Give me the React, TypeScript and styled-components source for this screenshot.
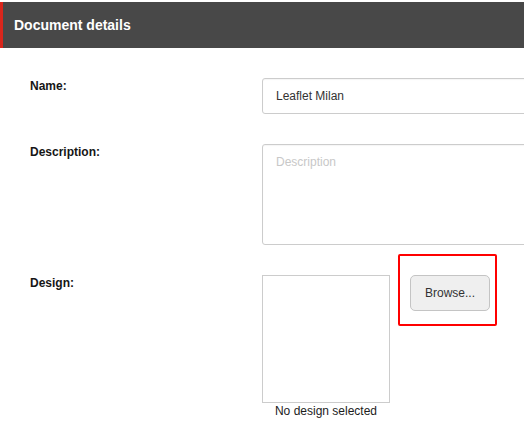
import React from "react";
import styled, { createGlobalStyle } from "styled-components";

const GlobalStyle = createGlobalStyle`
  html, body {
    margin: 0;
    padding: 0;
    background: #ffffff;
    font-family: "Liberation Sans", Arial, sans-serif;
    overflow: hidden;
  }
  #root {
    padding-top: 2px;
  }
`;

const Panel = styled.section`
  width: 100%;
  overflow: hidden;
`;

const Header = styled.header`
  display: flex;
  align-items: center;
  height: 46px;
  padding-left: 11px;
  background: #484848;
  border-left: 3px solid #d9261c;
  box-sizing: border-box;
`;

const Title = styled.h2`
  margin: 0;
  font-size: 14px;
  font-weight: bold;
  color: #ffffff;
  line-height: 16px;
`;

const Form = styled.form`
  display: grid;
  grid-template-columns: 232px 1fr;
  row-gap: 30px;
  padding: 30px 0 0 30px;
`;

const Label = styled.label`
  padding-top: 1px;
  font-size: 12px;
  line-height: 14px;
  font-weight: bold;
  color: #161616;
`;

const fieldBase = `
  box-sizing: border-box;
  width: 320px;
  border: 1px solid #cccccc;
  border-radius: 3px;
  background: #ffffff;
  font-family: "Liberation Sans", Arial, sans-serif;
  font-size: 12px;
  color: #333333;
  padding: 0 13px;
  outline: none;
  box-shadow: inset 0 1px 1px rgba(0, 0, 0, 0.04);
`;

const TextInput = styled.input`
  ${fieldBase}
  height: 36px;
`;

const TextArea = styled.textarea`
  ${fieldBase}
  height: 101px;
  padding-top: 10px;
  resize: none;
  &::placeholder {
    color: #c8c8c8;
  }
`;

const DesignRow = styled.div`
  display: flex;
  align-items: flex-start;
  gap: 20px;
`;

const Preview = styled.figure`
  margin: 0;
  display: flex;
  flex-direction: column;
  align-items: center;
  width: 128px;
`;

const PreviewBox = styled.div`
  box-sizing: border-box;
  width: 128px;
  height: 128px;
  border: 1px solid #cccccc;
  background: #ffffff;
`;

const Caption = styled.figcaption`
  margin-top: 1px;
  font-size: 12px;
  line-height: 14px;
  color: #1c1c1c;
  white-space: nowrap;
`;

const BrowseSlot = styled.div`
  position: relative;
`;

const Highlight = styled.span`
  position: absolute;
  left: -12px;
  top: -21px;
  right: -7px;
  bottom: -15px;
  border: 2px solid #ff0000;
  border-radius: 2px;
  pointer-events: none;
`;

const BrowseButton = styled.button`
  box-sizing: border-box;
  width: 80px;
  height: 36px;
  border: 1px solid #c4c4c4;
  border-radius: 5px;
  background: #efefef;
  font-family: "Liberation Sans", Arial, sans-serif;
  font-size: 12px;
  color: #333333;
  cursor: pointer;
`;

export default function App() {
  return (
    <>
      <GlobalStyle />
      <Panel>
        <Header>
          <Title>Document details</Title>
        </Header>
        <Form onSubmit={(e) => e.preventDefault()}>
          <Label htmlFor="doc-name">Name:</Label>
          <TextInput id="doc-name" defaultValue="Leaflet Milan" />

          <Label htmlFor="doc-desc">Description:</Label>
          <TextArea id="doc-desc" placeholder="Description" />

          <Label>Design:</Label>
          <DesignRow>
            <Preview>
              <PreviewBox />
              <Caption>No design selected</Caption>
            </Preview>
            <BrowseSlot>
              <BrowseButton type="button">Browse...</BrowseButton>
              <Highlight />
            </BrowseSlot>
          </DesignRow>
        </Form>
      </Panel>
    </>
  );
}
